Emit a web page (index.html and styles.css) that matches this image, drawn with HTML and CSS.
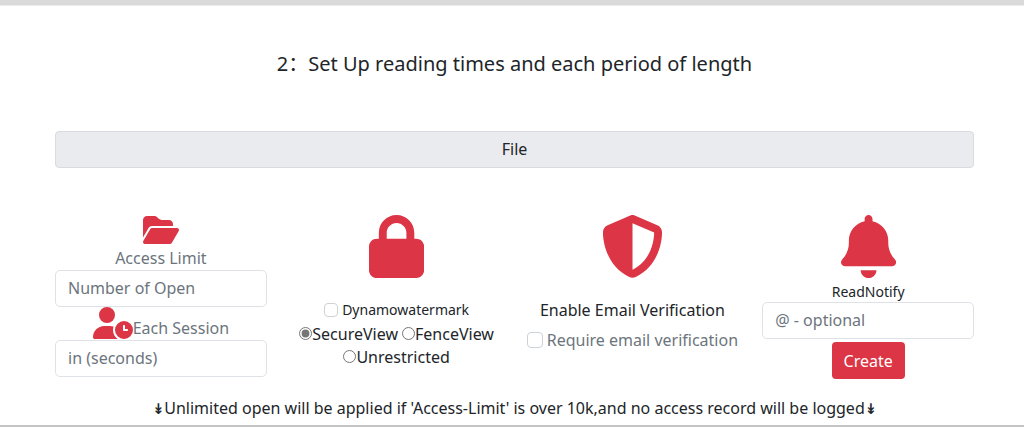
FILE: index.html
```html
<!DOCTYPE html>
<html lang="en">
<head>
<meta charset="utf-8">
<meta name="viewport" content="width=device-width, initial-scale=1">
<title>Set Up reading times</title>
<link rel="stylesheet" href="styles.css">
</head>
<body>
<main class="panel">
  <h1 class="title">2：Set Up reading times and each period of length</h1>
  <button type="button" class="file">File</button>
  <form class="options">
    <section class="column">
      <label class="field-label stacked" for="limit">
        <svg class="icon-small" viewBox="0 0 576 512" aria-hidden="true"><path d="M88.7 223.8L0 375.8V96C0 60.7 28.7 32 64 32H181.5c17 0 33.3 6.7 45.3 18.7l26.5 26.5c12 12 28.3 18.7 45.3 18.7H416c35.3 0 64 28.7 64 64v32H144c-22.8 0-43.8 12.1-55.3 31.8zm27.6 16.1C122.1 230 132.6 224 144 224H544c11.5 0 22 6.1 27.7 16.1s5.7 22.2-.1 32.1l-112 192C453.9 474 443.4 480 432 480H32c-11.5 0-22-6.1-27.7-16.1s-5.7-22.2 .1-32.1l112-192z"/></svg>
        <span>Access Limit</span>
      </label>
      <input class="text-input" id="limit" type="text" placeholder="Number of Open">
      <label class="field-label" for="session">
        <svg class="icon-small" viewBox="0 0 640 512" aria-hidden="true"><path d="M224 0a128 128 0 1 1 0 256A128 128 0 1 1 224 0zM178.3 304h91.4c20.6 0 40.4 3.5 58.8 9.9C323 331 320 349.1 320 368c0 59.5 29.5 112.1 74.8 144H29.7C13.3 512 0 498.7 0 482.3C0 383.8 79.8 304 178.3 304zM352 368a144 144 0 1 1 288 0 144 144 0 1 1 -288 0zm144-80c-8.8 0-16 7.2-16 16v64c0 8.8 7.2 16 16 16h48c8.8 0 16-7.2 16-16s-7.2-16-16-16H512V304c0-8.8-7.2-16-16-16z"/></svg>
        <span>Each Session</span>
      </label>
      <input class="text-input" id="session" type="text" placeholder="in (seconds)">
    </section>

    <section class="column">
      <svg class="icon-large" viewBox="0 0 448 512" aria-hidden="true"><path d="M144 144v48H304V144c0-44.2-35.8-80-80-80s-80 35.8-80 80zM80 192V144C80 64.5 144.5 0 224 0s144 64.5 144 144v48h16c35.3 0 64 28.7 64 64V448c0 35.3-28.7 64-64 64H64c-35.3 0-64-28.7-64-64V256c0-35.3 28.7-64 64-64H80z"/></svg>
      <div class="choices">
        <label class="check small"><input type="checkbox">Dynamowatermark</label>
        <div class="radios">
          <label class="radio"><input type="radio" name="view" checked>SecureView</label>
          <label class="radio"><input type="radio" name="view">FenceView</label>
          <label class="radio"><input type="radio" name="view">Unrestricted</label>
        </div>
      </div>
    </section>

    <section class="column">
      <svg class="icon-large" viewBox="0 0 512 512" aria-hidden="true"><path d="M256 0c4.6 0 9.2 1 13.4 2.9L457.7 82.8c22 9.3 38.4 31 38.3 57.2c-.5 99.2-41.3 280.7-213.6 363.2c-16.7 8-36.1 8-52.8 0C57.3 420.7 16.5 239.2 16 140c-.1-26.2 16.3-47.9 38.3-57.2L242.7 2.9C246.8 1 251.4 0 256 0zm0 66.8V444.8C394 378 431.1 230.1 432 141.4L256 66.8l0 0z"/></svg>
      <div class="choices">
        <p class="heading">Enable Email Verification</p>
        <label class="check muted"><input type="checkbox">Require email verification</label>
      </div>
    </section>

    <section class="column">
      <svg class="icon-large" viewBox="0 0 448 512" aria-hidden="true"><path d="M224 0c-17.7 0-32 14.3-32 32V51.2C119 66 64 130.6 64 208v18.8c0 47-17.3 92.4-48.5 127.6l-7.4 8.3c-8.4 9.4-10.4 22.9-5.3 34.4S19.4 416 32 416H416c12.6 0 24-7.4 29.2-18.9s3.1-25-5.3-34.4l-7.4-8.3C401.3 319.2 384 273.9 384 226.8V208c0-77.4-55-142-128-156.8V32c0-17.7-14.3-32-32-32zm45.3 493.3c12-12 18.7-28.3 18.7-45.3H224 160c0 17 6.7 33.3 18.7 45.3s28.3 18.7 45.3 18.7s33.3-6.7 45.3-18.7z"/></svg>
      <label class="notify-label" for="notify">ReadNotify</label>
      <input class="text-input" id="notify" type="text" placeholder="@ - optional">
      <button type="button" class="create">Create</button>
    </section>
  </form>
  <p class="note"><span class="arrow">↡</span>Unlimited open will be applied if 'Access-Limit' is over 10k,and no access record will be logged<span class="arrow">↡</span></p>
</main>
</body>
</html>
```
FILE: styles.css
```css
* {
  box-sizing: border-box;
}

body {
  margin: 0;
  background: #fff;
  color: #212529;
  font-family: "Noto Sans", "Open Sans", "Noto Sans CJK SC", "DejaVu Sans", sans-serif;
  font-size: 16px;
  line-height: 24px;
}

input,
button {
  margin: 0;
  font: inherit;
  color: inherit;
}

.panel {
  padding: 44px 50px 5px 55px;
  border-top: 5px solid #dadada;
  border-bottom: 2px solid #c4c4c4;
  box-shadow: inset 0 1px #ececec;
}

.title {
  margin: 0 0 52px;
  font-size: 20px;
  font-weight: 400;
  line-height: 30px;
  text-align: center;
}

.file {
  display: block;
  width: 100%;
  height: 37px;
  padding: 0 0 2px;
  background: #e9ebee;
  border: 1px solid #d8dce0;
  border-radius: 4px;
}

.options {
  display: grid;
  grid-template-columns: repeat(4, minmax(0, 1fr));
  column-gap: 24px;
  margin-top: 46px;
}

.column {
  display: flex;
  flex-direction: column;
  align-items: center;
}

.icon-small {
  height: 32px;
  fill: #dc3545;
}

.icon-large {
  height: 63px;
  margin-top: 1px;
  fill: #dc3545;
}

.field-label {
  display: flex;
  align-items: flex-start;
  height: 33px;
  color: #6c757d;
}

.field-label span {
  padding-top: 9px;
}

.stacked {
  flex-direction: column;
  align-items: center;
  height: 56px;
}

.stacked span {
  padding-top: 0;
}

.text-input {
  width: 100%;
  height: 37px;
  padding: 5px 12px 7px;
  background: #fff;
  border: 1px solid #dee2e6;
  border-radius: 5px;
}

.text-input::placeholder {
  color: #6c757d;
  opacity: 1;
}

.choices {
  display: flex;
  flex-direction: column;
  align-items: center;
  margin-top: 20px;
}

.check {
  display: flex;
  align-items: center;
  gap: 4px;
  height: 24px;
}

.check input {
  appearance: none;
  width: 16px;
  height: 16px;
  background: #fff;
  border: 1px solid #ced2d6;
  border-radius: 4px;
}

.check input:checked {
  background: #dc3545;
}

.small,
.notify-label {
  font-size: 14px;
}

.check.small input {
  width: 14px;
  height: 14px;
}

.muted {
  margin-top: 6px;
  color: #6c757d;
}

.radios {
  display: flex;
  flex-wrap: wrap;
  justify-content: center;
  column-gap: 4px;
}

.radio {
  display: flex;
  align-items: center;
  height: 23px;
}

.radio input {
  width: 13px;
  height: 13px;
  accent-color: #767676;
}

.heading {
  margin: 0;
}

.notify-label {
  height: 24px;
  line-height: 28px;
}

.create {
  height: 37px;
  margin-top: 3px;
  padding: 0 12px;
  background: #dc3545;
  border: 0;
  border-radius: 4px;
  color: #fff;
}

.note {
  margin: 17px 0 0;
  text-align: center;
}

.arrow {
  font-family: "DejaVu Sans Mono", monospace;
  font-size: 20px;
  line-height: 16px;
}
```
